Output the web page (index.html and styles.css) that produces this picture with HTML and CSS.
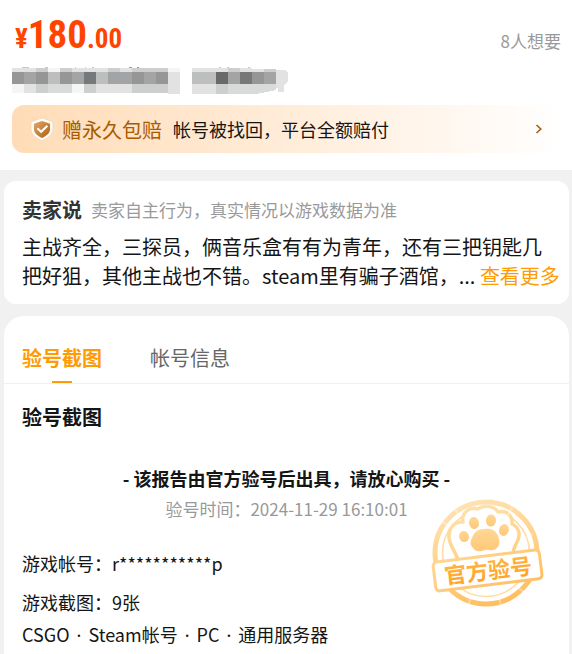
FILE: index.html
```html
<!DOCTYPE html>
<html lang="zh-CN">
<head>
<meta charset="utf-8">
<meta name="viewport" content="width=device-width, initial-scale=1">
<title>商品详情</title>
<link rel="stylesheet" href="styles.css">
</head>
<body>
<header class="summary">
  <div class="price-row">
    <div class="price"><span class="price-unit">¥</span><span class="price-main">180</span><span class="price-unit">.00</span></div>
    <span class="wanted">8人想要</span>
  </div>
  <svg class="masked-title" width="276" height="27" viewBox="0 0 276 27" shape-rendering="crispEdges" aria-hidden="true">
    <path fill="#c9c9c9" d="M10 0h7v1h-7zM33 0h3v1h-3zM63 0h1v1h-1zM73 0h1v1h-1zM80 0h2v1h-2zM207 0h2v1h-2zM215 0h2v1h-2zM236 0h2v1h-2z"/>
    <path fill="#999" d="M117 0h3v1h-3zM125 0h2v1h-2z"/>
    <path fill="#e2e2e2" d="M0 1h156v4H0zM180 1h60v4h-60z"/>
    <path fill="#cecece" d="M24 1h12v4H24zM48 1h12v4H48zM96 1h12v4H96zM120 1h36v4h-36zM216 1h12v4h-12zM252 2h12v3h-12z"/>
    <path fill="#f5f5f5" d="M36 1h12v4H36zM156 1h12v4h-12z"/>
    <path fill="#969696" d="M0 5h12v12H0zM24 5h12v12H24zM48 5h12v12H48zM120 5h12v12h-12zM144 5h12v12h-12zM240 5h12v12h-12z"/>
    <path fill="#a3a4a5" d="M12 5h12v12H12zM60 5h12v12H60zM96 5h24v12H96zM132 5h12v12h-12zM216 5h12v12h-12zM252 5h12v12h-12z"/>
    <path fill="#bdbfbe" d="M36 5h12v12H36zM84 5h12v12H84zM180 5h24v12h-24z"/>
    <path fill="#77787a" d="M72 5h12v12H72zM228 5h12v12h-12z"/>
    <path fill="#696969" d="M204 5h12v12h-12z"/>
    <path fill="#e2e2e2" d="M156 5h12v12h-12zM240 2h12v3h-12zM264 3h9l3 3v9l-4 3v7h-6v-4h-2zM12 17h12v9H12zM84 17h36v9H84zM156 17h12v10h-12zM180 17h24v10h-24z"/>
    <path fill="#f5f5f5" d="M0 17h12v9H0zM60 17h12v9H60z"/>
    <path fill="#cdcfce" d="M24 17h12v9H24zM72 17h12v9H72zM120 17h36v9h-36zM204 17h12v10h-12z"/>
    <path fill="#d9dada" d="M36 17h24v9H36zM216 17h48v6l-20 4h-28z"/>
  </svg>
  <a class="guarantee" href="#">
    <svg class="shield" width="24" height="24" viewBox="0 0 24 24" aria-hidden="true">
      <defs>
        <linearGradient id="shield-fill" x1="0" y1="0" x2="1" y2="1"><stop offset="0" stop-color="#dfa76b"/><stop offset="1" stop-color="#ad6211"/></linearGradient>
      </defs>
      <path d="M12 1 23 4.800v7.400c0 5.200-4.800 9-11 11.600C5.800 21.200 1 17.400 1 12.200V4.800z" fill="#fffaf4" stroke="#efd2b3" stroke-width=".7" stroke-linejoin="round"/>
      <path d="M12 4 20 6.800v5.600c0 3.700-3.500 6.400-8 8.500-4.500-2.100-8-4.800-8-8.500V6.800z" fill="url(#shield-fill)"/>
      <path d="m7.400 11.300 3.700 3.500 6.300-6" fill="none" stroke="#fff" stroke-width="2"/>
    </svg>
    <strong class="guarantee-name">赠永久包赔</strong>
    <span class="guarantee-text">帐号被找回，平台全额赔付</span>
    <svg class="chevron" width="8" height="12" viewBox="0 0 8 12" aria-hidden="true"><path d="m1.500 2 4.300 4-4.300 4" fill="none" stroke="#a85c0c" stroke-width="1.600"/></svg>
  </a>
</header>

<main class="content">
  <section class="card seller">
    <div class="seller-head">
      <h2 class="seller-title">卖家说</h2>
      <span class="hint">卖家自主行为，真实情况以游戏数据为准</span>
    </div>
    <p class="seller-text">主战齐全，三探员，俩音乐盒有有为青年，还有三把钥匙几把好狙，其他主战也不错。steam里有骗子酒馆，... <a class="more" href="#">查看更多</a></p>
  </section>

  <section class="card report">
    <nav class="tabs">
      <a class="tab tab-active" href="#report">验号截图</a>
      <a class="tab" href="#account">帐号信息</a>
    </nav>
    <div class="report-body" id="report">
      <h2 class="report-title">验号截图</h2>
      <div class="notice">
        <strong class="notice-title">- 该报告由官方验号后出具，请放心购买 -</strong>
        <span class="hint">验号时间：2024-11-29 16:10:01</span>
      </div>
      <p class="detail">游戏帐号：r***********p</p>
      <p class="detail">游戏截图：9张</p>
      <p class="detail detail-last">CSGO <span class="dot">·</span> Steam帐号 <span class="dot">·</span> PC <span class="dot">·</span> 通用服务器</p>
      <svg class="stamp" width="118" height="114" viewBox="0 0 118 114" role="img" aria-label="官方验号">
        <defs>
          <linearGradient id="ink" gradientUnits="userSpaceOnUse" x1="30" y1="5" x2="65" y2="112"><stop offset="0" stop-color="#ffe3b3"/><stop offset=".5" stop-color="#ffd28a"/><stop offset="1" stop-color="#ffbd5c"/></linearGradient>
          <linearGradient id="pad-ink" x1="0" y1="0" x2="0" y2="1"><stop offset="0" stop-color="#ffd796"/><stop offset="1" stop-color="#ffc876"/></linearGradient>
          <linearGradient id="text-ink" x1="0" y1="0" x2="0" y2="1"><stop offset="0" stop-color="#ffb94e"/><stop offset="1" stop-color="#ffa01f"/></linearGradient>
        </defs>
        <circle cx="57" cy="56" r="51" fill="#fff" stroke="url(#ink)" stroke-width="5"/>
        <circle cx="57" cy="56" r="43.500" fill="none" stroke="#ffdc9f" stroke-width="1.600"/>
        <path d="M29 64C28 56 21 50 20 41c-1-9 5-17 14-16-2-9 7-16 15-13C54 8 65 8 69 15c9-2 15 4 14 12 7 3 9 11 5 18-3 6-5 10-3 18" fill="#fff" stroke="url(#ink)" stroke-width="3.500" stroke-linejoin="round"/>
        <g fill="url(#pad-ink)">
          <ellipse cx="35" cy="39.500" rx="4.800" ry="5.600" transform="rotate(-20 35 39.500)"/>
          <ellipse cx="45" cy="26" rx="5" ry="6" transform="rotate(-10 45 26)"/>
          <ellipse cx="62" cy="23.500" rx="5" ry="6" transform="rotate(8 62 23.500)"/>
          <ellipse cx="75" cy="33" rx="4.800" ry="6" transform="rotate(15 75 33)"/>
          <path d="M43 41c2-6 6-9 12-9 7-1 12 1 14 7 2 5 2 9-1 12-4 4-8 1-12 2-5 2-9 2-12-2-3-3-3-6-1-10z"/>
        </g>
        <g transform="rotate(-7 58 73)">
          <rect x="5" y="59" width="107" height="29" rx="4" fill="#fff" stroke="url(#ink)" stroke-width="3"/>
          <text class="stamp-text" x="59" y="82" text-anchor="middle" fill="url(#text-ink)">官方验号</text>
        </g>
        <path d="m13 25 9 4M25 10l5 9M84 8l-5 10M104 37l-7 4M18 91l8-5M39 109l3-9M72 109l-2-8M95 95l-7-5" fill="none" stroke="#fff" stroke-opacity=".35" stroke-width="2"/>
      </svg>
    </div>
  </section>
</main>
</body>
</html>
```
FILE: styles.css
```css
* {
  box-sizing: border-box;
}

body {
  display: flex;
  flex-direction: column;
  min-height: 100vh;
  margin: 0;
  background: #f1f1f1;
  color: #151515;
  font-family: "Noto Sans CJK SC", sans-serif;
  font-size: 18px;
}

h2,
p {
  margin: 0;
}

a {
  color: inherit;
  text-decoration: none;
}

.summary {
  padding: 8px 11px 17px 12px;
  background: #fff;
}

.price-row {
  display: flex;
  align-items: baseline;
  justify-content: space-between;
  height: 59px;
}

.price {
  padding-left: 3px;
  color: #ff4400;
  font-family: "Liberation Sans Narrow", "Roboto Condensed", Roboto, sans-serif;
  font-weight: 700;
  line-height: 54px;
}

.price-main {
  font-size: 39px;
}

.price-unit {
  font-size: 27px;
}

.wanted,
.hint {
  color: #999;
  font-size: 17px;
  line-height: 24px;
}

.masked-title {
  display: block;
}

.guarantee {
  display: flex;
  align-items: center;
  height: 48px;
  margin-top: 11px;
  padding: 0 18px;
  border-radius: 12px;
  background: linear-gradient(90deg, #ffdcb7, #ffedda 52%, #fff);
}

.guarantee-name {
  margin: 0 11px 0 8px;
  color: #a95b00;
  font-size: 20px;
  font-weight: 400;
}

.guarantee-text {
  flex: 1;
}

.content {
  display: flex;
  flex: 1;
  flex-direction: column;
  gap: 12px;
  padding: 11px 3px 0 4px;
}

.card {
  border-radius: 12px;
  background: #fff;
}

.seller {
  padding: 14px 8px 14px 18px;
}

.seller-head {
  display: flex;
  align-items: center;
  gap: 9px;
  height: 30px;
  margin-bottom: 7px;
}

.seller-title {
  color: #333;
  font-size: 20px;
  line-height: 30px;
}

.seller-text {
  font-size: 20px;
  line-height: 29px;
}

.more {
  display: inline-block;
  color: #ff9b05;
}

.report {
  flex: 1;
  border-radius: 20px 20px 0 0;
}

.tabs {
  display: flex;
  gap: 48px;
  padding: 24px 18px 0;
  border-bottom: 1px solid #f1f1f1;
}

.tab {
  display: flex;
  flex-direction: column;
  align-items: center;
  height: 43px;
  color: #666;
  font-size: 20px;
  line-height: 36px;
}

.tab-active {
  color: #ff9b05;
  font-weight: 700;
}

.tab-active::after {
  width: 20px;
  height: 2px;
  margin-top: auto;
  background: #ff9b05;
  content: "";
}

.report-body {
  position: relative;
  padding: 18px 18px 0;
}

.report-title {
  font-size: 20px;
  line-height: 30px;
}

.notice {
  display: flex;
  flex-direction: column;
  align-items: center;
  margin: 30px 0 26px;
}

.notice-title {
  line-height: 33px;
}

.notice .hint {
  line-height: 28px;
}

.detail {
  margin-bottom: 11px;
  line-height: 28px;
}

.detail-last {
  margin-top: -7px;
  margin-bottom: 0;
}

.dot {
  padding: 0 3px;
  font-family: "Noto Sans", sans-serif;
}

.stamp {
  position: absolute;
  top: 113px;
  right: 22px;
}

.stamp-text {
  font-size: 22px;
  font-weight: 700;
}
```
